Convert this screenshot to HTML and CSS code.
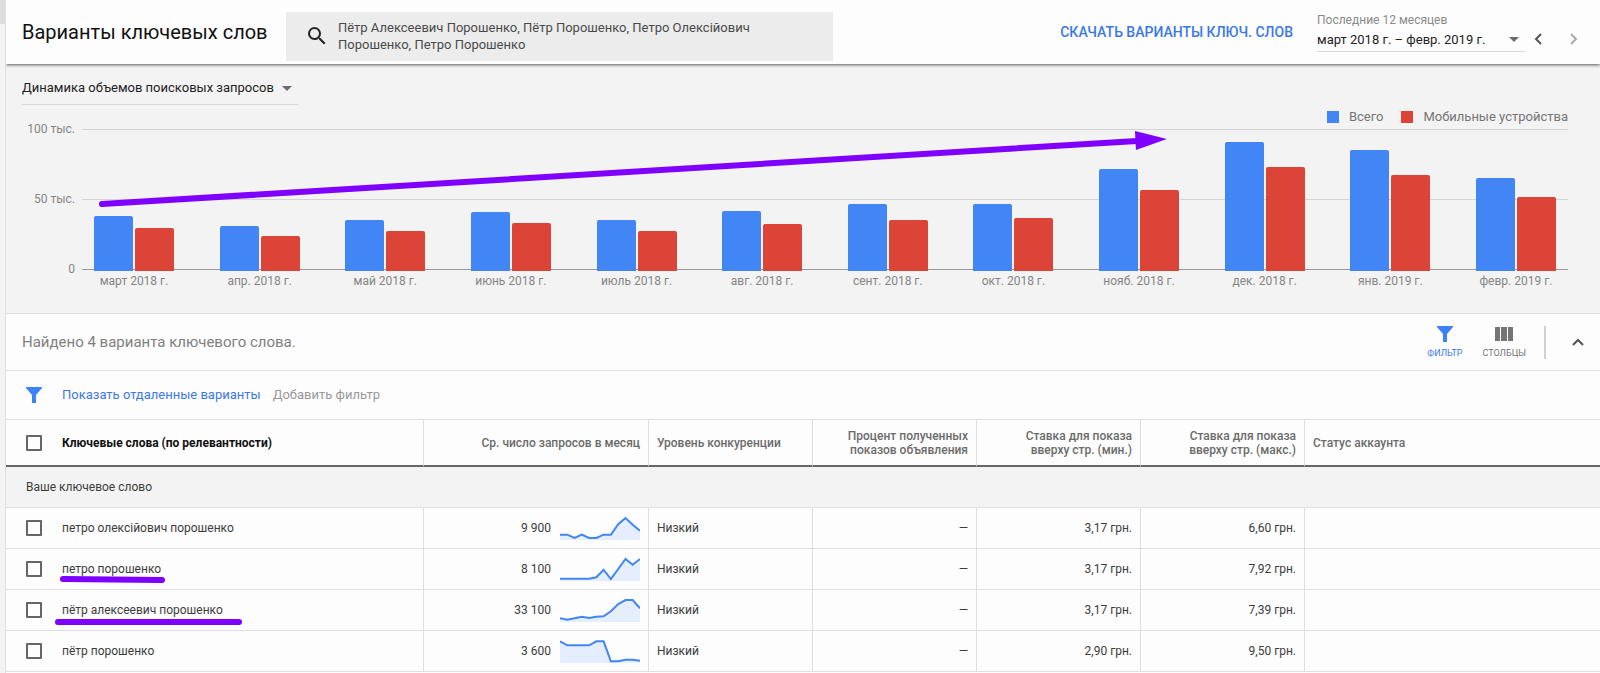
FILE: index.html
```html
<!DOCTYPE html>
<html lang="ru">
<head>
<meta charset="utf-8">
<title>Варианты ключевых слов</title>
<link rel="stylesheet" href="styles.css">
</head>
<body>
<aside class="rail"><div class="rail-thumb"></div></aside>
<main class="page">
  <header class="topbar">
    <h1 class="title">Варианты ключевых слов</h1>
    <label class="search">
      <svg class="search-icon" viewBox="3 3 18 18"><path d="M15.5 14h-.79l-.28-.27A6.47 6.47 0 0 0 16 9.5 6.5 6.5 0 1 0 9.5 16c1.61 0 3.09-.59 4.23-1.57l.27.28v.79l5 4.99L20.49 19l-4.99-5zm-6 0C7.01 14 5 11.99 5 9.5S7.01 5 9.5 5 14 7.01 14 9.5 11.99 14 9.5 14z"/></svg>
      <textarea class="search-text" rows="2" aria-label="Ключевые слова">Пётр Алексеевич Порошенко, Пётр Порошенко, Петро Олексійович Порошенко, Петро Порошенко</textarea>
    </label>
    <button class="download" type="button">СКАЧАТЬ ВАРИАНТЫ КЛЮЧ. СЛОВ</button>
    <div class="period">
      <label class="period-label" for="period">Последние 12 месяцев</label>
      <div class="period-field">
        <select id="period" class="select"><option>март 2018 г. – февр. 2019 г.</option></select>
        <svg class="caret" viewBox="0 0 10 5"><path d="M0 0h10L5 5z"/></svg>
      </div>
    </div>
    <div class="pager">
      <button class="step" type="button" aria-label="Назад"><svg viewBox="0 0 8 12"><path d="M7 1L2 6l5 5"/></svg></button>
      <button class="step step-off" type="button" aria-label="Вперёд"><svg viewBox="0 0 8 12"><path d="M1 1l5 5-5 5"/></svg></button>
    </div>
  </header>

  <section class="trend">
    <div class="metric">
      <select class="select" aria-label="Показатель"><option>Динамика объемов поисковых запросов</option></select>
      <svg class="caret" viewBox="0 0 10 5"><path d="M0 0h10L5 5z"/></svg>
    </div>
    <div class="legend">
      <span class="key"><i class="swatch total"></i>Всего</span>
      <span class="key"><i class="swatch mobile"></i>Мобильные устройства</span>
    </div>
    <div class="chart">
      <div class="axis"><span>100 тыс.</span><span>50 тыс.</span><span>0</span></div>
      <div class="plot">
        <div class="month"><div class="bars"><i class="bar total" style="height:55px"></i><i class="bar mobile" style="height:43px"></i></div><span>март 2018 г.</span></div>
        <div class="month"><div class="bars"><i class="bar total" style="height:45px"></i><i class="bar mobile" style="height:35px"></i></div><span>апр. 2018 г.</span></div>
        <div class="month"><div class="bars"><i class="bar total" style="height:51px"></i><i class="bar mobile" style="height:40px"></i></div><span>май 2018 г.</span></div>
        <div class="month"><div class="bars"><i class="bar total" style="height:59px"></i><i class="bar mobile" style="height:48px"></i></div><span>июнь 2018 г.</span></div>
        <div class="month"><div class="bars"><i class="bar total" style="height:51px"></i><i class="bar mobile" style="height:40px"></i></div><span>июль 2018 г.</span></div>
        <div class="month"><div class="bars"><i class="bar total" style="height:60px"></i><i class="bar mobile" style="height:47px"></i></div><span>авг. 2018 г.</span></div>
        <div class="month"><div class="bars"><i class="bar total" style="height:67px"></i><i class="bar mobile" style="height:51px"></i></div><span>сент. 2018 г.</span></div>
        <div class="month"><div class="bars"><i class="bar total" style="height:67px"></i><i class="bar mobile" style="height:53px"></i></div><span>окт. 2018 г.</span></div>
        <div class="month"><div class="bars"><i class="bar total" style="height:102px"></i><i class="bar mobile" style="height:81px"></i></div><span>нояб. 2018 г.</span></div>
        <div class="month"><div class="bars"><i class="bar total" style="height:129px"></i><i class="bar mobile" style="height:104px"></i></div><span>дек. 2018 г.</span></div>
        <div class="month"><div class="bars"><i class="bar total" style="height:121px"></i><i class="bar mobile" style="height:96px"></i></div><span>янв. 2019 г.</span></div>
        <div class="month"><div class="bars"><i class="bar total" style="height:93px"></i><i class="bar mobile" style="height:74px"></i></div><span>февр. 2019 г.</span></div>
        <svg class="growth" viewBox="0 0 1072 80" preserveAspectRatio="none"><path class="stroke" d="M5 74L1042 11"/><path d="M1040 1l32 8-31 11z"/></svg>
      </div>
    </div>
  </section>

  <section class="summary">
    <p class="found">Найдено 4 варианта ключевого слова.</p>
    <div class="tools">
      <button class="tool tool-on" type="button"><svg class="icon" viewBox="0 0 16 16"><path d="M0 0h16v1l-6 7v8H6V8L0 1z"/></svg>ФИЛЬТР</button>
      <button class="tool" type="button"><svg class="icon icon-wide" viewBox="0 0 18 16"><path d="M0 1h5v14H0zM6 1h6v14H6zM13 1h5v14h-5z"/></svg>СТОЛБЦЫ</button>
    </div>
    <button class="collapse" type="button" aria-label="Свернуть"><svg viewBox="0 0 12 8"><path d="M1 7l5-5 5 5"/></svg></button>
  </section>

  <section class="filters">
    <svg class="icon filter-icon" viewBox="0 0 16 16"><path d="M0 0h16v1l-6 7v8H6V8L0 1z"/></svg>
    <a class="link" href="#">Показать отдаленные варианты</a>
    <button class="add" type="button">Добавить фильтр</button>
  </section>

  <table class="grid">
    <colgroup><col class="c-word"><col class="c-avg"><col class="c-mid"><col class="c-mid"><col class="c-mid"><col class="c-mid"><col></colgroup>
    <thead>
      <tr>
        <th class="main"><label class="pick"><input type="checkbox">Ключевые слова (по релевантности)</label></th>
        <th class="num">Ср. число запросов в месяц</th>
        <th>Уровень конкуренции</th>
        <th class="num">Процент полученных показов объявления</th>
        <th class="num">Ставка для показа<br>вверху стр. (мин.)</th>
        <th class="num">Ставка для показа<br>вверху стр. (макс.)</th>
        <th>Статус аккаунта</th>
      </tr>
    </thead>
    <tbody>
      <tr class="group"><td colspan="7">Ваше ключевое слово</td></tr>
      <tr>
        <td><label class="pick"><input type="checkbox">петро олексійович порошенко</label></td>
        <td><div class="avg">9 900<svg class="spark" viewBox="0 0 80 24"><path class="area" d="M0 18.7H7.3L14.5 22 21.8 18.7 29.1 22H36.4L43.6 18.7H50.9L58.2 8.3 65.5 2 72.7 8.7 80 14.7V24H0z"/><path class="line" d="M0 18.7H7.3L14.5 22 21.8 18.7 29.1 22H36.4L43.6 18.7H50.9L58.2 8.3 65.5 2 72.7 8.7 80 14.7"/></svg></div></td>
        <td>Низкий</td><td class="num">—</td><td class="num">3,17 грн.</td><td class="num">6,60 грн.</td><td></td>
      </tr>
      <tr>
        <td><label class="pick"><input type="checkbox">петро порошенко</label><svg class="mark" viewBox="0 0 188 8"><path d="M8 3L107 4"/></svg></td>
        <td><div class="avg">8 100<svg class="spark" viewBox="0 0 80 24"><path class="area" d="M0 21.7H29.1L36.4 20.3 43.6 12.7 50.9 22 58.2 12 65.5 2 72.7 7.7 80 2V24H0z"/><path class="line" d="M0 21.7H29.1L36.4 20.3 43.6 12.7 50.9 22 58.2 12 65.5 2 72.7 7.7 80 2"/></svg></div></td>
        <td>Низкий</td><td class="num">—</td><td class="num">3,17 грн.</td><td class="num">7,92 грн.</td><td></td>
      </tr>
      <tr>
        <td><label class="pick"><input type="checkbox">пётр алексеевич порошенко</label><svg class="mark" viewBox="0 0 188 8"><path d="M3 5H184"/></svg></td>
        <td><div class="avg">33 100<svg class="spark" viewBox="0 0 80 24"><path class="area" d="M0 20.3L7.3 21.7 14.5 20.3 21.8 18.7 29.1 20 36.4 18.7 43.6 18.3 50.9 13.3 58.2 6 65.5 2H72.7L80 10.3V24H0z"/><path class="line" d="M0 20.3L7.3 21.7 14.5 20.3 21.8 18.7 29.1 20 36.4 18.7 43.6 18.3 50.9 13.3 58.2 6 65.5 2H72.7L80 10.3"/></svg></div></td>
        <td>Низкий</td><td class="num">—</td><td class="num">3,17 грн.</td><td class="num">7,39 грн.</td><td></td>
      </tr>
      <tr>
        <td><label class="pick"><input type="checkbox">пётр порошенко</label></td>
        <td><div class="avg">3 600<svg class="spark" viewBox="0 0 80 24"><path class="area" d="M0 2.3L7.3 6.3H29.1L36.4 2.3H43.6L50.9 22.3H58.2L65.5 20.7H72.7L80 21.7V24H0z"/><path class="line" d="M0 2.3L7.3 6.3H29.1L36.4 2.3H43.6L50.9 22.3H58.2L65.5 20.7H72.7L80 21.7"/></svg></div></td>
        <td>Низкий</td><td class="num">—</td><td class="num">2,90 грн.</td><td class="num">9,50 грн.</td><td></td>
      </tr>
    </tbody>
  </table>
</main>
</body>
</html>
```

FILE: styles.css
```css
* { box-sizing: border-box; }

body {
  margin: 0;
  display: flex;
  min-height: 100vh;
  overflow: hidden;
  background: #fdfdfd;
  color: #3c3c3c;
  font: 13px/16px Roboto, "Noto Sans", sans-serif;
}

button, select, textarea { font: inherit; color: inherit; border: 0; background: none; padding: 0; }

.rail { flex: none; width: 6px; background: #f3f3f3; border-right: 1px solid #dfdfdf; }
.rail-thumb { height: 24px; background: #dcdcdc; }

.page { flex: 1; min-width: 0; overflow: hidden; }

/* Top bar */
.topbar {
  position: relative;
  display: flex;
  align-items: center;
  height: 64px;
  padding-left: 16px;
  box-shadow: 0 1px 3px rgba(0, 0, 0, .65);
}
.title { flex: none; width: 264px; margin: 0; font-size: 20px; line-height: 24px; font-weight: 400; color: #111; }
.search {
  display: flex;
  align-items: center;
  gap: 12px;
  width: 547px;
  height: 49px;
  margin-top: 8px;
  padding-left: 22px;
  background: #ececec;
}
.search-icon { flex: none; width: 18px; height: 18px; fill: #222; }
.search-text { width: 460px; height: 34px; resize: none; overflow: hidden; line-height: 17px; color: #4a4a4a; }
.download { margin-left: auto; font-size: 14px; line-height: 20px; font-weight: 500; color: #3b78e7; white-space: nowrap; }
.period { width: 208px; margin-left: 24px; }
.period-label { display: block; font-size: 12px; line-height: 16px; color: #8a8a8a; }
.period-field { display: flex; align-items: center; height: 24px; padding-right: 6px; border-bottom: 1px solid #d8d8d8; }
.select { flex: 1; min-width: 0; appearance: none; color: #222; line-height: 20px; }
.caret { flex: none; width: 10px; height: 5px; fill: #6b6b6b; }
.pager { display: flex; gap: 28px; margin: 14px 22px 0 9px; }
.step, .collapse { display: flex; }
.step svg { width: 8px; height: 12px; }
.step path, .collapse path { fill: none; stroke: #555; stroke-width: 2; }
.step-off path { stroke: #aaa; }

/* Trend chart */
.trend { background: #f3f3f3; border-bottom: 1px solid #dfdfdf; padding: 12px 32px 24px 16px; }
.metric { display: flex; align-items: center; width: 276px; height: 29px; padding: 0 6px 4px 0; border-bottom: 1px solid #d8d8d8; }
.legend { display: flex; justify-content: flex-end; gap: 18px; height: 16px; margin-top: 4px; color: #757575; }
.key { display: flex; align-items: center; gap: 10px; }
.swatch { width: 12px; height: 12px; }
.total { background: #4285f4; }
.mobile { background: #db4437; }
.chart { display: flex; margin-top: -4px; font-size: 12px; color: #858585; }
.axis { display: flex; flex-direction: column; justify-content: space-between; width: 53px; height: 156px; margin-right: 7px; text-align: right; }
.plot {
  position: relative;
  flex: 1;
  display: flex;
  justify-content: space-between;
  margin-top: 8px;
  padding: 0 12px;
  background:
    linear-gradient(#d3d3d3, #d3d3d3) 0 0 / 100% 1px no-repeat,
    linear-gradient(#d3d3d3, #d3d3d3) 0 70px / 100% 1px no-repeat,
    linear-gradient(#999, #999) 0 140px / 100% 1px no-repeat;
}
.month { display: flex; flex-direction: column; align-items: center; width: 80px; gap: 2px; white-space: nowrap; }
.bars { display: flex; align-items: flex-end; gap: 2px; height: 142px; }
.bar { width: 39px; border-radius: 2px 2px 0 0; }
.growth { position: absolute; left: 1%; top: 1px; width: 72%; height: 80px; fill: #7f00ff; }
.growth .stroke { stroke: #7f00ff; stroke-width: 6; stroke-linecap: round; }

/* Summary and filters */
.summary { display: flex; align-items: center; height: 57px; padding: 0 16px; border-bottom: 1px solid #dfdfdf; }
.found { flex: 1; margin: 0; font-size: 15px; line-height: 20px; color: #808080; }
.tools { display: flex; gap: 20px; padding-right: 18px; border-right: 2px solid #d0d0d0; }
.tool { display: flex; flex-direction: column; align-items: center; gap: 5px; font-size: 9px; line-height: 12px; color: #757575; }
.tool-on { color: #3b78e7; }
.icon { display: block; width: 16px; height: 16px; fill: #757575; }
.icon-wide { width: 18px; }
.tool-on .icon, .filter-icon { fill: #3b82f6; }
.collapse { margin-left: 26px; }
.collapse svg { width: 12px; height: 8px; }
.filters { display: flex; align-items: center; height: 49px; padding-left: 20px; border-bottom: 1px solid #dfdfdf; }
.link { margin: 0 12px 0 20px; color: #3b78e7; text-decoration: none; }
.add { color: #999; }

/* Keyword table */
.grid { width: 100%; table-layout: fixed; border-collapse: separate; border-spacing: 0; font-size: 12px; line-height: 14px; }
.c-word { width: 418px; }
.c-avg { width: 225px; }
.c-mid { width: 164px; }
.grid th, .grid td { padding: 0 8px; text-align: left; border-right: 1px solid #dfdfdf; }
.grid th:last-child, .grid td:last-child { border-right: 0; }
.grid th { height: 47px; font-weight: 500; color: #6b6b6b; border-bottom: 2px solid #666; }
.grid td { position: relative; height: 41px; border-bottom: 1px solid #dfdfdf; }
.grid th:first-child, .grid td:first-child { padding-left: 20px; }
.grid .main { font-weight: 700; color: #111; }
.grid .num { text-align: right; }
.group td { background: #f3f3f3; }
.pick { display: flex; align-items: center; gap: 20px; }
.pick input { appearance: none; flex: none; width: 16px; height: 16px; margin: 0; border: 2px solid #666; border-radius: 1px; }
.avg { display: flex; align-items: center; justify-content: flex-end; gap: 9px; }
.spark { width: 80px; height: 24px; }
.area { fill: #e4eefe; }
.line { fill: none; stroke: #4285f4; stroke-width: 2; }
.mark { position: absolute; left: 49px; bottom: 5px; width: 188px; height: 8px; }
.mark path { stroke: #7f00ff; stroke-width: 6; stroke-linecap: round; }
```
